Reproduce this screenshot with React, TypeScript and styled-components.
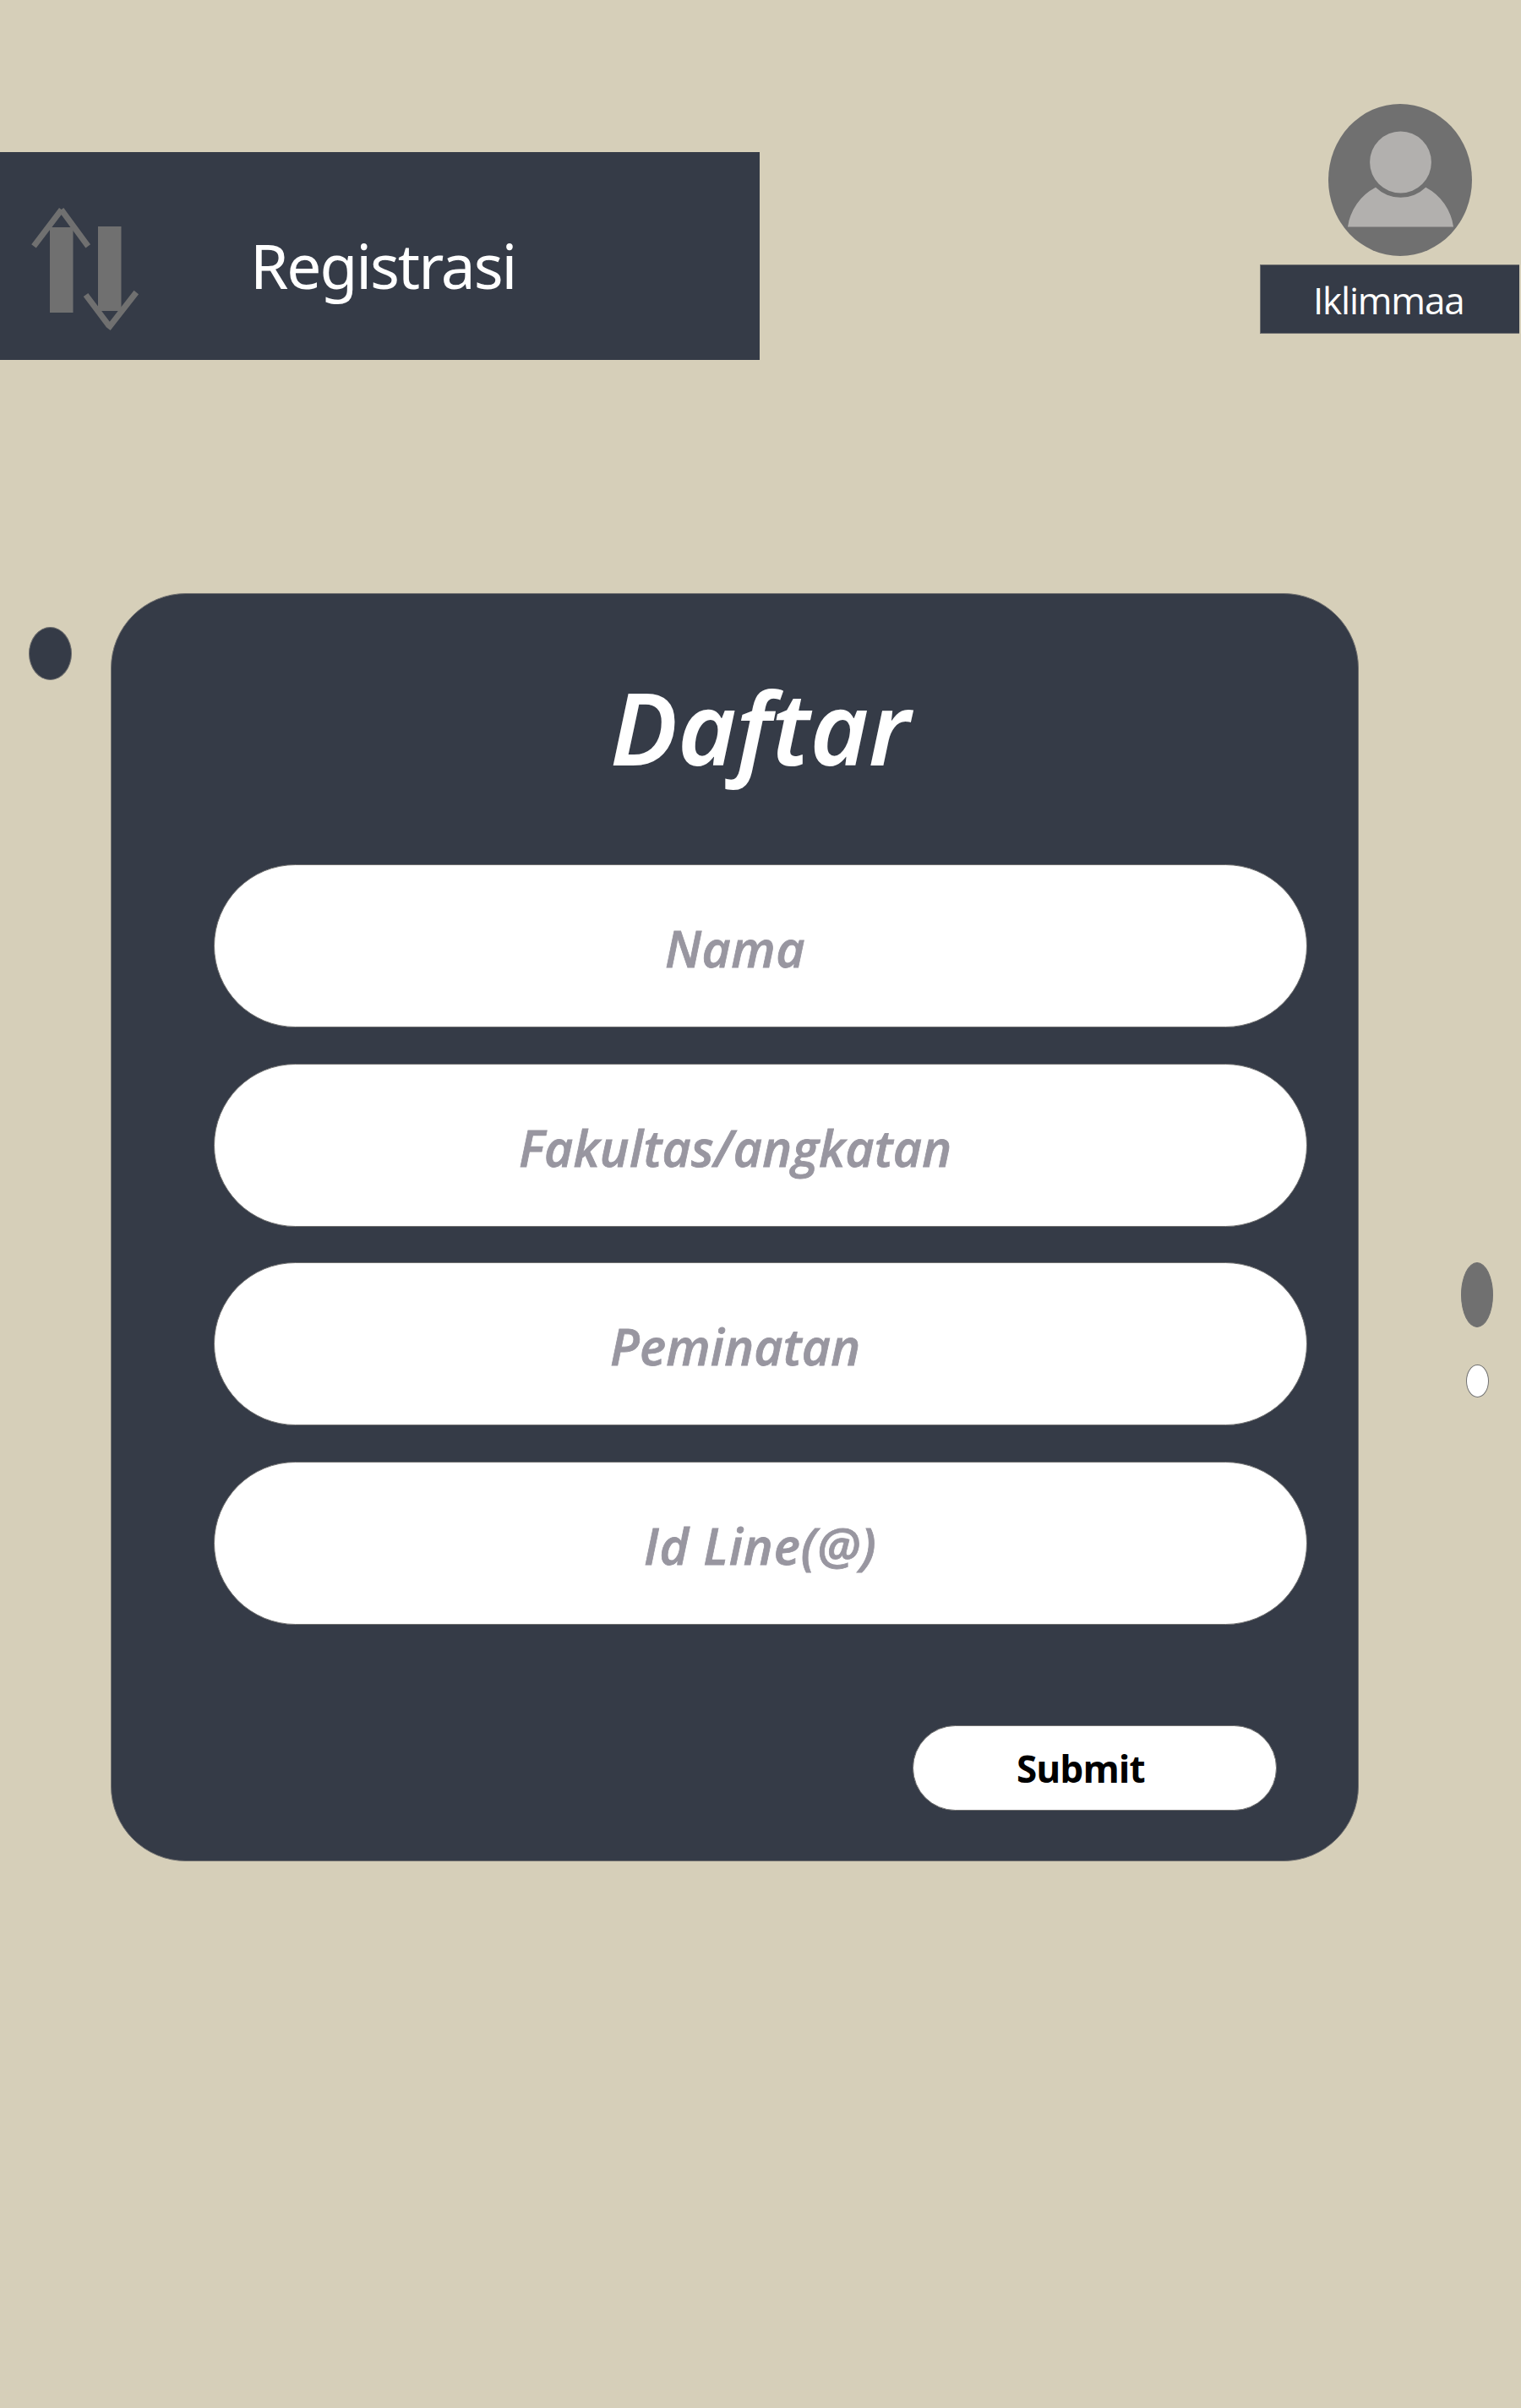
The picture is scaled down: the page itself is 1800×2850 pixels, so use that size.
import React from "react";
import styled, { createGlobalStyle } from "styled-components";

const navy = "#353b47";
const sand = "#d6cfb9";
const gray = "#707070";

const GlobalStyle = createGlobalStyle`
  *, *::before, *::after { box-sizing: border-box; }
  body { margin: 0; background: ${sand}; }
`;

const Page = styled.div`
  width: 1800px;
  height: 2850px;
  overflow: hidden;
  background: ${sand};
  font-family: "Open Sans", "Noto Sans", sans-serif;
  white-space: nowrap;
`;

const Header = styled.header`
  display: flex;
  justify-content: space-between;
  align-items: flex-start;
  height: 702px;
  padding: 123px 2px 0 0;
`;

const TitleBar = styled.div`
  display: flex;
  align-items: center;
  width: 899px;
  height: 246px;
  margin-top: 57px;
  padding-left: 36px;
  background: ${navy};
`;

const SwapIcon = styled.svg`
  flex: none;
  width: 130px;
  height: 180px;
`;

const Title = styled.h1`
  margin: 0 0 0 130px;
  padding-top: 21px;
  font: 400 73px/100px "Noto Sans", sans-serif;
  letter-spacing: -2.08px;
  color: #fff;
`;

const User = styled.div`
  display: flex;
  flex-direction: column;
  width: 307px;
`;

const Avatar = styled.svg`
  width: 170px;
  height: 180px;
  margin-left: 81px;
`;

const UserName = styled.div`
  height: 82px;
  margin-top: 10px;
  padding: 1px 0 0 62px;
  border: 1px solid ${gray};
  border-right: 0;
  background: ${navy};
  font-size: 44px;
  line-height: 80px;
  letter-spacing: -1.2px;
  color: #fff;
`;

const Main = styled.main`
  display: flex;
  align-items: flex-start;
`;

const LeftRail = styled.div`
  width: 131px;
  padding: 40px 0 0 34px;
`;

const RightRail = styled.div`
  display: flex;
  flex-direction: column;
  align-items: center;
  gap: 44px;
  width: 38px;
  margin: 792px 0 0 121px;
`;

const Dot = styled.span<{ $w: number; $h: number; $fill: string }>`
  display: block;
  width: ${(p) => p.$w}px;
  height: ${(p) => p.$h}px;
  border: 1px solid ${gray};
  border-radius: 50%;
  background: ${(p) => p.$fill};
`;

const Panel = styled.form`
  display: flex;
  flex-direction: column;
  width: 1477px;
  height: 1501px;
  padding: 97px 60px 0 121px;
  border: 1px solid ${gray};
  border-radius: 89px;
  background: ${navy};
`;

const Heading = styled.h2`
  margin: 0 0 103px;
  padding-left: 469px;
  font-family: "Noto Sans", sans-serif;
  font-size: 119px;
  font-style: italic;
  font-weight: 600;
  line-height: 120px;
  letter-spacing: -0.1px;
  color: #fff;
`;

const Fields = styled.div`
  display: flex;
  flex-direction: column;
  gap: 42.5px;
`;

const Field = styled.div<{ $inset: number; $tracking: number }>`
  height: 193px;
  padding: 3px 0 0 ${(p) => p.$inset}px;
  border: 1px solid ${gray};
  border-radius: 97px;
  background: #fff;
  font-size: 59px;
  font-style: italic;
  font-weight: 600;
  line-height: 191px;
  letter-spacing: ${(p) => p.$tracking}px;
  color: #9896a0;
  -webkit-text-stroke: 0.8px #9896a0;
`;

const Submit = styled.button`
  align-self: flex-end;
  width: 431px;
  height: 101px;
  margin: 119px 36px 0 0;
  padding: 1px 0 0 122px;
  border: 1px solid ${gray};
  border-radius: 51px;
  background: #fff;
  font: 700 44px/98px "Noto Sans", sans-serif;
  letter-spacing: -0.66px;
  text-align: left;
  color: #000;
`;

const fields = [
  { label: "Nama", inset: 533, tracking: 0.53 },
  { label: "Fakultas/angkatan", inset: 360, tracking: 0.24 },
  { label: "Peminatan", inset: 468, tracking: 0.2 },
  { label: "Id Line(@)", inset: 508, tracking: 0.97 },
];

export default function App() {
  return (
    <Page>
      <GlobalStyle />
      <Header>
        <TitleBar>
          <SwapIcon viewBox="36 213 130 180" fill="none" stroke={gray} strokeWidth="7">
            <path d="M59 269H86.5V370H59Z M116 268H143.5V368H116Z" fill={gray} stroke="none" />
            <path d="M40 291.4L72.8 248.1M104.2 291.4L72.5 248.1" />
            <path d="M101.5 349L128.3 384.7M161.3 346L127.9 388.9" />
          </SwapIcon>
          <Title>Registrasi</Title>
        </TitleBar>
        <User>
          <Avatar viewBox="0 0 170 180">
            <ellipse cx="85" cy="90" rx="85" ry="90" fill={gray} />
            <circle cx="85.5" cy="69" r="36.4" fill="#b2b0ae" />
            <path
              d="M23 145.5A63 62 0 0 1 56 98.8A42.5 42.5 0 0 0 115.3 98.8A63 62 0 0 1 148 145.5Z"
              fill="#b2b0ae"
            />
          </Avatar>
          <UserName>Iklimmaa</UserName>
        </User>
      </Header>
      <Main>
        <LeftRail>
          <Dot $w={51} $h={63} $fill={navy} />
        </LeftRail>
        <Panel>
          <Heading>Daftar</Heading>
          <Fields>
            {fields.map((f) => (
              <Field key={f.label} $inset={f.inset} $tracking={f.tracking}>
                {f.label}
              </Field>
            ))}
          </Fields>
          <Submit type="button">Submit</Submit>
        </Panel>
        <RightRail>
          <Dot $w={38} $h={77} $fill={gray} />
          <Dot $w={27} $h={39} $fill="#fff" />
        </RightRail>
      </Main>
    </Page>
  );
}
